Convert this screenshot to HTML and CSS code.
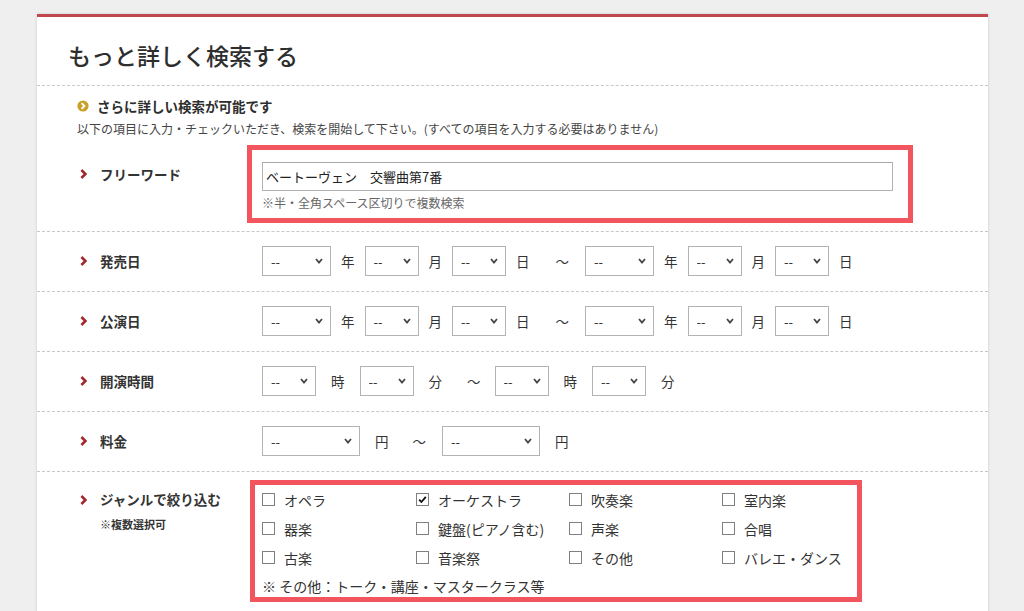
FILE: index.html
```html
<!DOCTYPE html>
<html lang="ja">
<head>
<meta charset="utf-8">
<title>もっと詳しく検索する</title>
<link rel="stylesheet" href="styles.css">
</head>
<body>
<div class="page">
  <section class="panel">
    <h1 class="title">もっと詳しく検索する</h1>

    <div class="intro">
      <p class="lead"><svg class="lead-icon" viewBox="0 0 12 12" width="12" height="12"><circle cx="6" cy="6" r="5.6" fill="#c9a128"/><polyline points="4.6,3.2 7.4,6 4.6,8.8" fill="none" stroke="#fff" stroke-width="1.9"/></svg>さらに詳しい検索が可能です</p>
      <p class="desc">以下の項目に入力・チェックいただき、検索を開始して下さい。(すべての項目を入力する必要はありません)</p>
    </div>

    <div class="row row-free">
      <div class="label label-free"><svg class="chev" viewBox="0 0 7 10" width="7" height="10"><polyline points="1.4,1 5.4,5 1.4,9" fill="none" stroke="#a3262d" stroke-width="2.5"/></svg>フリーワード</div>
      <div class="field field-free">
        <input class="text" type="text" value="ベートーヴェン　交響曲第7番">
        <p class="hint">※半・全角スペース区切りで複数検索</p>
        <span class="mark mark-free"></span>
      </div>
    </div>

    <div class="row">
      <div class="label"><svg class="chev" viewBox="0 0 7 10" width="7" height="10"><polyline points="1.4,1 5.4,5 1.4,9" fill="none" stroke="#a3262d" stroke-width="2.5"/></svg>発売日</div>
      <div class="field controls date">
        <span class="sel w69"><select><option>--</option></select><svg class="arr" viewBox="0 0 8 6"><polyline points="1,1 4,4.5 7,1" fill="none" stroke="#444" stroke-width="1.8"/></svg></span>
        <span class="unit">年</span>
        <span class="sel w54"><select><option>--</option></select><svg class="arr" viewBox="0 0 8 6"><polyline points="1,1 4,4.5 7,1" fill="none" stroke="#444" stroke-width="1.8"/></svg></span>
        <span class="unit">月</span>
        <span class="sel w54"><select><option>--</option></select><svg class="arr" viewBox="0 0 8 6"><polyline points="1,1 4,4.5 7,1" fill="none" stroke="#444" stroke-width="1.8"/></svg></span>
        <span class="unit">日</span>
        <span class="tilde">～</span>
        <span class="sel w69"><select><option>--</option></select><svg class="arr" viewBox="0 0 8 6"><polyline points="1,1 4,4.5 7,1" fill="none" stroke="#444" stroke-width="1.8"/></svg></span>
        <span class="unit">年</span>
        <span class="sel w54"><select><option>--</option></select><svg class="arr" viewBox="0 0 8 6"><polyline points="1,1 4,4.5 7,1" fill="none" stroke="#444" stroke-width="1.8"/></svg></span>
        <span class="unit">月</span>
        <span class="sel w54"><select><option>--</option></select><svg class="arr" viewBox="0 0 8 6"><polyline points="1,1 4,4.5 7,1" fill="none" stroke="#444" stroke-width="1.8"/></svg></span>
        <span class="unit">日</span>
      </div>
    </div>

    <div class="row">
      <div class="label"><svg class="chev" viewBox="0 0 7 10" width="7" height="10"><polyline points="1.4,1 5.4,5 1.4,9" fill="none" stroke="#a3262d" stroke-width="2.5"/></svg>公演日</div>
      <div class="field controls date">
        <span class="sel w69"><select><option>--</option></select><svg class="arr" viewBox="0 0 8 6"><polyline points="1,1 4,4.5 7,1" fill="none" stroke="#444" stroke-width="1.8"/></svg></span>
        <span class="unit">年</span>
        <span class="sel w54"><select><option>--</option></select><svg class="arr" viewBox="0 0 8 6"><polyline points="1,1 4,4.5 7,1" fill="none" stroke="#444" stroke-width="1.8"/></svg></span>
        <span class="unit">月</span>
        <span class="sel w54"><select><option>--</option></select><svg class="arr" viewBox="0 0 8 6"><polyline points="1,1 4,4.5 7,1" fill="none" stroke="#444" stroke-width="1.8"/></svg></span>
        <span class="unit">日</span>
        <span class="tilde">～</span>
        <span class="sel w69"><select><option>--</option></select><svg class="arr" viewBox="0 0 8 6"><polyline points="1,1 4,4.5 7,1" fill="none" stroke="#444" stroke-width="1.8"/></svg></span>
        <span class="unit">年</span>
        <span class="sel w54"><select><option>--</option></select><svg class="arr" viewBox="0 0 8 6"><polyline points="1,1 4,4.5 7,1" fill="none" stroke="#444" stroke-width="1.8"/></svg></span>
        <span class="unit">月</span>
        <span class="sel w54"><select><option>--</option></select><svg class="arr" viewBox="0 0 8 6"><polyline points="1,1 4,4.5 7,1" fill="none" stroke="#444" stroke-width="1.8"/></svg></span>
        <span class="unit">日</span>
      </div>
    </div>

    <div class="row">
      <div class="label"><svg class="chev" viewBox="0 0 7 10" width="7" height="10"><polyline points="1.4,1 5.4,5 1.4,9" fill="none" stroke="#a3262d" stroke-width="2.5"/></svg>開演時間</div>
      <div class="field controls time">
        <span class="sel w54"><select><option>--</option></select><svg class="arr" viewBox="0 0 8 6"><polyline points="1,1 4,4.5 7,1" fill="none" stroke="#444" stroke-width="1.8"/></svg></span>
        <span class="unit">時</span>
        <span class="sel w54"><select><option>--</option></select><svg class="arr" viewBox="0 0 8 6"><polyline points="1,1 4,4.5 7,1" fill="none" stroke="#444" stroke-width="1.8"/></svg></span>
        <span class="unit">分</span>
        <span class="tilde">～</span>
        <span class="sel w54"><select><option>--</option></select><svg class="arr" viewBox="0 0 8 6"><polyline points="1,1 4,4.5 7,1" fill="none" stroke="#444" stroke-width="1.8"/></svg></span>
        <span class="unit">時</span>
        <span class="sel w54"><select><option>--</option></select><svg class="arr" viewBox="0 0 8 6"><polyline points="1,1 4,4.5 7,1" fill="none" stroke="#444" stroke-width="1.8"/></svg></span>
        <span class="unit">分</span>
      </div>
    </div>

    <div class="row">
      <div class="label"><svg class="chev" viewBox="0 0 7 10" width="7" height="10"><polyline points="1.4,1 5.4,5 1.4,9" fill="none" stroke="#a3262d" stroke-width="2.5"/></svg>料金</div>
      <div class="field controls price">
        <span class="sel w98"><select><option>--</option></select><svg class="arr" viewBox="0 0 8 6"><polyline points="1,1 4,4.5 7,1" fill="none" stroke="#444" stroke-width="1.8"/></svg></span>
        <span class="unit">円</span>
        <span class="tilde">～</span>
        <span class="sel w98"><select><option>--</option></select><svg class="arr" viewBox="0 0 8 6"><polyline points="1,1 4,4.5 7,1" fill="none" stroke="#444" stroke-width="1.8"/></svg></span>
        <span class="unit">円</span>
      </div>
    </div>

    <div class="row row-genre">
      <div class="label label-genre">
        <div class="label-main"><svg class="chev" viewBox="0 0 7 10" width="7" height="10"><polyline points="1.4,1 5.4,5 1.4,9" fill="none" stroke="#a3262d" stroke-width="2.5"/></svg>ジャンルで絞り込む</div>
        <div class="label-sub">※複数選択可</div>
      </div>
      <div class="field field-genre">
        <div class="genres">
          <label class="genre"><span class="cb"></span>オペラ</label>
          <label class="genre"><span class="cb"><svg viewBox="0 0 11 11" width="11" height="11"><polyline points="2.2,5.6 4.4,8 8.8,2.8" fill="none" stroke="#111" stroke-width="1.8"/></svg></span>オーケストラ</label>
          <label class="genre"><span class="cb"></span>吹奏楽</label>
          <label class="genre"><span class="cb"></span>室内楽</label>
          <label class="genre"><span class="cb"></span>器楽</label>
          <label class="genre"><span class="cb"></span>鍵盤(ピアノ含む)</label>
          <label class="genre"><span class="cb"></span>声楽</label>
          <label class="genre"><span class="cb"></span>合唱</label>
          <label class="genre"><span class="cb"></span>古楽</label>
          <label class="genre"><span class="cb"></span>音楽祭</label>
          <label class="genre"><span class="cb"></span>その他</label>
          <label class="genre"><span class="cb"></span>バレエ・ダンス</label>
          <p class="genre-note">※ その他：トーク・講座・マスタークラス等</p>
        </div>
        <span class="mark mark-genre"></span>
      </div>
    </div>
  </section>
</div>
</body>
</html>
```

FILE: styles.css
```css
* { box-sizing: border-box; }

html, body {
  margin: 0;
  padding: 0;
}

body {
  background: #efefef;
  font-family: "Noto Sans CJK JP", "Noto Sans", sans-serif;
  color: #333;
  overflow: hidden;
}

.page {
  padding: 14px 36px 0 37px;
}

.panel {
  background: #fff;
  border-top: 3px solid #c0474e;
  box-shadow: 0 0 3px rgba(0, 0, 0, 0.14);
  min-height: 700px;
}

.title {
  margin: 0;
  padding: 20px 0 12px 31px;
  font-size: 23px;
  line-height: 36px;
  font-weight: 500;
  color: #2e2e2e;
  border-bottom: 1px dashed #c8c8c8;
}

.intro {
  padding: 10px 0 0 40px;
}

.lead {
  margin: 0;
  display: flex;
  align-items: center;
  font-size: 13.5px;
  line-height: 20px;
  font-weight: 700;
  color: #2e2e2e;
}

.lead-icon {
  margin-right: 8px;
  flex: none;
}

.desc {
  margin: 3px 0 0;
  font-size: 12px;
  line-height: 20px;
  color: #444;
}

.row {
  display: grid;
  grid-template-columns: 225px 1fr;
  padding: 14px 0 15px;
  border-bottom: 1px dashed #c8c8c8;
}

.label {
  display: flex;
  align-items: center;
  padding-left: 43px;
  font-size: 13.5px;
  line-height: 30px;
  font-weight: 700;
  color: #333;
}

.chev {
  margin-right: 13px;
  flex: none;
}

.field {
  position: relative;
}

.row-free {
  padding: 23px 0 19px;
}

.label-free {
  align-items: flex-start;
  line-height: 24px;
}

.label-free .chev {
  margin-top: 7px;
}

.text {
  display: block;
  width: 631px;
  height: 29px;
  margin: 0;
  padding: 0 3px;
  border: 1px solid #b3b3b3;
  border-top-color: #a8a8a8;
  font-family: "Noto Sans CJK JP", sans-serif;
  font-size: 13px;
  color: #222;
  background: #fff;
}

.hint {
  margin: 3px 0 0;
  font-size: 12px;
  line-height: 18px;
  color: #666;
}

.mark {
  position: absolute;
  border: 5px solid #f2555d;
  pointer-events: none;
}

.mark-free {
  top: -17px;
  left: -15px;
  width: 666px;
  height: 78px;
}

.controls {
  display: flex;
  align-items: center;
  height: 30px;
  font-size: 13.5px;
  color: #333;
}

.sel {
  position: relative;
  display: inline-flex;
  height: 30px;
  flex: none;
}

.sel select {
  -webkit-appearance: none;
  appearance: none;
  width: 100%;
  height: 30px;
  margin: 0;
  padding: 0 0 0 8px;
  border: 1px solid #b3b3b3;
  border-radius: 0;
  background: #fff;
  font-family: "Noto Sans CJK JP", sans-serif;
  font-size: 13px;
  color: #333;
}

.sel .arr {
  position: absolute;
  right: 8px;
  top: 12px;
  width: 8px;
  height: 6px;
  pointer-events: none;
}

.w54 { width: 54px; }
.w69 { width: 69px; }
.w98 { width: 98px; }

.unit {
  margin: 0 10px;
  line-height: 30px;
}

.tilde {
  line-height: 30px;
  margin: 0 16px 0 16px;
}

.time .unit,
.price .unit {
  margin: 0 15px;
}

.time .tilde {
  margin: 0 14px 0 10px;
}

.price .tilde {
  margin: 0 16px 0 9px;
}

.row-genre {
  padding: 13px 0 20px;
  border-bottom: none;
}

.label-genre {
  display: block;
}

.label-main {
  display: flex;
  align-items: center;
  line-height: 29px;
}

.label-sub {
  padding-left: 20px;
  font-size: 11px;
  line-height: 20px;
  font-weight: 700;
  color: #333;
}

.genres {
  display: grid;
  grid-template-columns: 154px 153px 153px 153px;
  width: 600px;
}

.genre {
  display: flex;
  align-items: center;
  height: 29px;
  font-size: 14px;
  color: #333;
}

.cb {
  width: 13px;
  height: 13px;
  margin-right: 9px;
  border: 1px solid #808080;
  background: #fff;
  display: inline-flex;
  align-items: center;
  justify-content: center;
  flex: none;
}

.genre-note {
  grid-column: 1 / -1;
  margin: 0;
  font-size: 14px;
  line-height: 29px;
  color: #333;
}

.mark-genre {
  top: -5px;
  left: -12px;
  width: 612px;
  height: 122px;
}
```
